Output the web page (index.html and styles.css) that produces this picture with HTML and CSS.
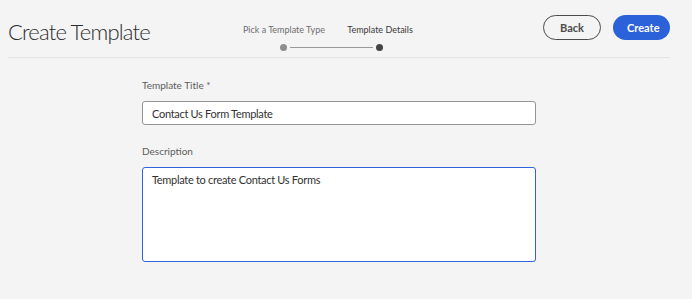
FILE: index.html
```html
<!DOCTYPE html>
<html lang="en">
<head>
  <meta charset="UTF-8" />
  <meta name="viewport" content="width=device-width, initial-scale=1.0"/>
  <title>Create Template</title>
  <link rel="stylesheet" href="styles.css">
</head>
<body>

<header class="page-header">
  <h1 class="page-title">Create Template</h1>

  <!-- Wizard steps -->
  <div class="stepper">
    <div class="step-labels">
      <span class="step-label">Pick a Template Type</span>
      <span class="step-label">Template Details</span>
    </div>
    <div class="step-track">
      <span class="step-dot done"></span>
      <span class="step-line"></span>
      <span class="step-dot current"></span>
    </div>
  </div>

  <div class="header-actions">
    <button class="btn btn-secondary">Back</button>
    <button class="btn btn-primary">Create</button>
  </div>
</header>

<main class="template-form">
  <div class="field">
    <label class="field-label" for="title">Template Title *</label>
    <input class="field-input" type="text" id="title" value="Contact Us Form Template">
  </div>
  <div class="field">
    <label class="field-label" for="description">Description</label>
    <textarea class="field-textarea" id="description">Template to create Contact Us Forms</textarea>
  </div>
</main>

</body>
</html>
```

FILE: styles.css
```css
body {
  margin: 0;
  font-family: Lato, 'Open Sans', sans-serif;
  background-color: #f4f4f4;
  color: #2c2c2c;
}

.page-header {
  display: grid;
  grid-template-columns: 228px 192px 1fr;
  align-items: center;
  height: 57px;
  margin: 0 22px 0 8px;
  border-bottom: 1px solid #e4e4e4;
}

.page-title {
  margin: 0;
  font-size: 22px;
  font-weight: 300;
  letter-spacing: -0.8px;
  color: #2c2c2c;
  padding-top: 6px;
}

/* Stepper */
.stepper {
  align-self: end;
  padding-bottom: 6px;
}

.step-labels {
  display: grid;
  grid-template-columns: 96px 96px;
  text-align: center;
  font-size: 9px;
  line-height: 12px;
}

.step-label {
  color: #6e6e6e;
  white-space: nowrap;
}

.step-label:last-child {
  color: #3a3a3a;
}

.step-track {
  display: flex;
  align-items: center;
  width: 103px;
  margin: 8px 0 0 44px;
}

.step-dot {
  width: 7px;
  height: 7px;
  border-radius: 50%;
  flex: none;
}

.step-dot.done {
  background-color: #8e8e8e;
}

.step-dot.current {
  background-color: #444;
}

.step-line {
  flex: 1;
  height: 1px;
  margin: 0 3px;
  background-color: #999;
}

.header-actions {
  display: flex;
  justify-content: flex-end;
  gap: 12px;
  padding-bottom: 3px;
}

.btn {
  height: 25px;
  padding: 0 14px;
  border-radius: 13px;
  font-family: inherit;
  font-size: 11px;
  font-weight: bold;
  cursor: pointer;
}

.btn-secondary {
  width: 58px;
  background: transparent;
  border: 1px solid #4b4b4b;
  color: #4b4b4b;
}

.btn-primary {
  width: 57px;
  background-color: #2c62d9;
  border: none;
  color: white;
}

/* Form */
.template-form {
  width: 394px;
  margin-left: 142px;
  padding-top: 20px;
}

.field {
  margin-bottom: 19px;
}

.field-label {
  display: block;
  font-size: 10px;
  line-height: 14px;
  color: #5c5c5c;
  margin-bottom: 9px;
}

.field-input,
.field-textarea {
  display: block;
  box-sizing: border-box;
  width: 100%;
  background: white;
  font-family: inherit;
  font-size: 11px;
  letter-spacing: -0.3px;
  color: #323232;
  border-radius: 3px;
}

.field-input {
  height: 24px;
  padding: 0 9px;
  border: 1px solid #959595;
}

.field-textarea {
  height: 95px;
  padding: 5px 9px;
  border: 1px solid #2f64dc;
  resize: none;
}
```
